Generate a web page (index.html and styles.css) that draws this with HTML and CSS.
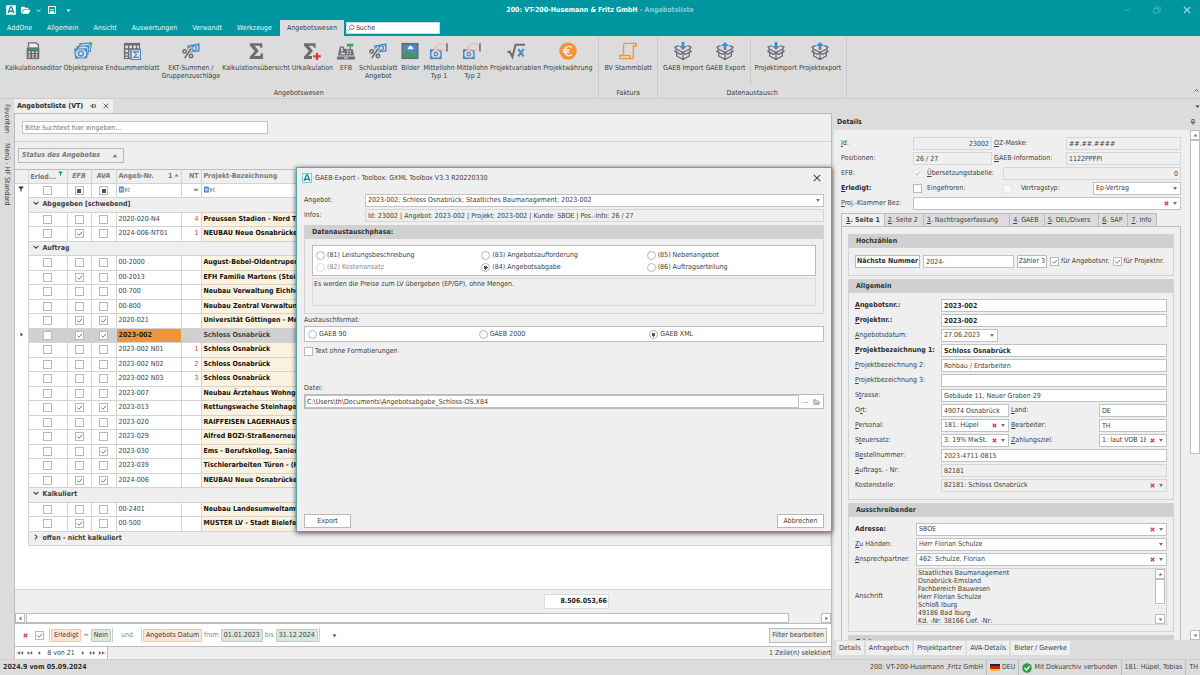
FILE: index.html
```html
<!DOCTYPE html>
<html lang="de">
<head>
<meta charset="utf-8">
<title>200: VT-200-Husemann &amp; Fritz GmbH - Angebotsliste</title>
<link rel="stylesheet" href="styles.css">
</head>
<body>
<svg class="defs" aria-hidden="true">
  <symbol id="i-calc" viewBox="0 0 20 20"><path d="M5 6V1h8l3 2v3" fill="#eee" stroke="#6b6c72" stroke-width="1.400"/><path d="M3 6h14v13H3z" fill="#6b6c72"/><path d="M4.500 7h11v2h-11z" fill="#3f9a55"/><path d="M5 10.500h2v1.800H5zm4 0h2v1.800H9zm4 0h2v1.800h-2zm-8 3h2v1.500H5zm4 0h2v1.500H9zm4 0h2v1.500h-2zm-8 2.600h2v1.500H5zm4 0h2v1.500H9zm4 0h2v1.500h-2z" fill="#e8e8e8"/></symbol>
  <symbol id="i-money" viewBox="0 0 20 20"><g fill="#dcdcdc" stroke="#4a8acb" stroke-width="1.300"><path d="M6.500 2l13-1-1.500 9.500-13 1z"/><path d="M3.500 5l13-1-1.200 10-12.300 1z"/><path d="M.8 8l13.200-.5.300 10L2 18z"/></g><path d="M6.500 2l4-.3-4.300 2.500zM15.500 1.300l4-.3-.6 3zM3.500 5l4-.3L3.200 8zM12.500 4.300l4-.3-.4 3z" fill="#4a8acb"/><circle cx="7.700" cy="12.800" r="2.700" fill="none" stroke="#4a8acb" stroke-width="1.500"/><path d="M.8 8l4-.2L1.400 12zM14 7.500l-4 .2 4.200 3.800zM2 18l3.500-.2-3.900-3.600zM14.300 17.500l-4 .2 3.900-3.700z" fill="#4a8acb"/></symbol>
  <symbol id="i-sheet" viewBox="0 0 20 20"><path d="M1 1h18v18H1z" fill="#6b6c72"/><path d="M2.500 4h3v3h-3zm4.500 0h3v3H7zm4.500 0h3v3h-3zm4.300 0h2v3h-2zM2.500 8.500h3v3h-3zm0 4.500h3v2h-3zm0 3.300h3v1.500h-3zM7 8.500h1v9H7z" fill="#dcdcdc"/><path d="M9 8.500h10.500V19.500H9z" fill="#e4e4e4" stroke="#4a8acb" stroke-width="1.300"/><path d="M17 12v-1h-5l3 3-3 3h5v-1" fill="none" stroke="#4a8acb" stroke-width="1.300"/></symbol>
  <symbol id="i-percent" viewBox="0 0 20 20"><path d="M6 4l13.500-2.500v9L6 12z" fill="#4a8acb"/><path d="M9 5L16.500 3.600 18 4.800v3.500L16.500 9.700 9 10.500z" fill="#dcdcdc"/><circle cx="13.500" cy="6.800" r="2.500" fill="none" stroke="#4a8acb" stroke-width="1.400"/><path d="M9.500 7L2.500 19" stroke="#dcdcdc" stroke-width="4"/><g fill="none" stroke="#6b6c72" stroke-width="1.700"><path d="M10 7.500L3 18"/><circle cx="2.900" cy="10.500" r="1.900"/><circle cx="10" cy="15.600" r="1.900"/></g></symbol>
  <symbol id="i-sigma" viewBox="0 0 20 20"><path d="M3 1.500h14v5h-2.200L14 4.300H8.500L13 10l-5 5.500h6.500l1-2.700h2.200V19H3v-2.300L8.600 10 3 3.800z" fill="#6b6c72"/></symbol>
  <symbol id="i-sigmaplus" viewBox="0 0 20 20"><path d="M1 1.500h13v5h-2L11.200 4.300H6.500L11 10l-5 5.500h4V19H1v-2.300L6.600 10 1 3.800z" fill="#6b6c72"/><path d="M14.300 12h2.500v2.700h2.900v2.500h-2.900V20h-2.500v-2.800h-2.900v-2.500h2.900z" fill="#e0353f"/></symbol>
  <symbol id="i-cash" viewBox="0 0 20 20"><path d="M11 2h7v3h-7z" fill="#3f9a55"/><path d="M14 5h1.500v3H14zM3 5h5v2.500h2V8h7.500l1.500 7h-18L2.500 8H3zM0 16h20v3.500H0z" fill="#6b6c72"/><path d="M4.500 6.500h2v4h-2zm6.500 3h1.500V11H11zm3 0h1.500V11H14zm-3 2.500h1.500v1.500H11zm3 0h1.500v1.500H14zM4 12h5v1.500H4zM8 17h4v1.200H8z" fill="#dcdcdc"/></symbol>
  <symbol id="i-image" viewBox="0 0 20 20"><path d="M.5 1h19v18H.5z" fill="#6b6c72"/><path d="M2.500 3h15v14h-15z" fill="#4a8acb"/><path d="M2.500 12.500L7 9.500l4 3.500 3-2 3.500 2v4h-15z" fill="#3f9a55"/><path d="M8.500 8c-1.500 0-1.500-2.200.3-2.200.5-2 3.200-2 3.500 0 1.700 0 1.700 2.200.2 2.200z" fill="#fff"/></symbol>
  <symbol id="i-hand" viewBox="0 0 20 20"><path d="M0 8h13v11H0z" fill="#4a8acb"/><path d="M3.300 9.700h6.400L11.400 11.500v4l-1.700 1.800H3.300l-1.700-1.800v-4z" fill="#dcdcdc"/><circle cx="6.500" cy="13.500" r="1.900" fill="none" stroke="#4a8acb" stroke-width="1.300"/><path d="M16.500 2.500l-5.500-.5-5 2.600c-1.200.8 0 2 1.200 1.600L4.500 8.500c-.7 1.400.5 2.200 1.800 1.500l2.700-1.800 3 .9 4.500-1.100" fill="#dcdcdc" stroke="#efb5a4" stroke-width="1.200"/><path d="M18 1.500h1.700v9H18z" fill="#6b6c72"/></symbol>
  <symbol id="i-root" viewBox="0 0 20 20"><path d="M.5 11.500l2.500-1 3 6L9.500 3H20" fill="none" stroke="#6b6c72" stroke-width="2.200"/><path d="M12.500 8l6 8m0-8l-6 8" stroke="#4a8acb" stroke-width="2.300"/></symbol>
  <symbol id="i-euro" viewBox="0 0 20 20"><circle cx="10" cy="10" r="9.700" fill="#f0953c"/><path d="M14.500 6.300A5 5 0 1 0 14.500 13.700M4.300 8.700h7.500M4.300 11.300h7" fill="none" stroke="#f5e9dc" stroke-width="1.800"/></symbol>
  <symbol id="i-scroll" viewBox="0 0 20 20"><path d="M5 15V3.500C5 2 6 1.500 7 1.500h12v3.300h-3V16c0 1.700-1 2.500-2 2.500H1V15h11v2c0 1 1.500 1.500 2 1.500M16 5V3" fill="none" stroke="#f0953c" stroke-width="1.500"/></symbol>
  <symbol id="i-box" viewBox="0 0 20 20"><path d="M3 10v5.500l7 4 7-4V10M10 12v7M3 8l7 3.500L17 8M3 8L.9 10.500l6.300 3.300L10 11.500l2.800 2.300 6.300-3.300L17 8l2-2.300L14.800 4M3 8L1 5.700 5.200 4" fill="none" stroke="#6b6c72" stroke-width="1.400" stroke-linejoin="round"/></symbol>
  <symbol id="i-down" viewBox="0 0 20 20"><use href="#i-box"/><path d="M8.500 0h3v4.500h3L10 9 5.500 4.500h3z" fill="#4a8acb"/></symbol>
  <symbol id="i-up" viewBox="0 0 20 20"><use href="#i-box"/><path d="M8.500 9V4.500h-3L10 0l4.500 4.500h-3V9z" fill="#4a8acb"/></symbol>
  <symbol id="i-x" viewBox="0 0 10 10"><path d="M1 1l8 8m0-8l-8 8" fill="none" stroke="currentColor" stroke-width="1.300"/></symbol>
  <symbol id="i-xb" viewBox="0 0 10 10"><path d="M1.500 1.500l7 7m0-7l-7 7" fill="none" stroke="currentColor" stroke-width="2.400"/></symbol>
  <symbol id="i-pin" viewBox="0 0 10 10"><path d="M0 5h4M4 1.500v7M4 3h5v4H4" fill="none" stroke="currentColor" stroke-width="1.300"/></symbol>
  <symbol id="i-caret" viewBox="0 0 10 10"><path d="M1 3h8L5 8z" fill="currentColor"/></symbol>
  <symbol id="i-chev" viewBox="0 0 10 10"><path d="M1 3l4 4 4-4" fill="none" stroke="currentColor" stroke-width="1.700"/></symbol>
  <symbol id="i-logo" viewBox="0 0 10 10"><path d="M.5.500h9v9h-9z" fill="#fff" stroke="currentColor" stroke-width=".5"/><path d="M2.200 8L4.400 2h1.200L7.800 8M3 6.200h4" fill="none" stroke="#07949d" stroke-width="1.400"/></symbol>
  <symbol id="i-funnel" viewBox="0 0 10 10"><path d="M1 1h8v1.500L6 5v4H4V5L1 2.500z" fill="currentColor"/></symbol>
  <symbol id="i-abc" viewBox="0 0 20 10"><path d="M0 0h8v10H0z" fill="#4a8acb"/><path d="M2.500 8V3.500h3V8M2.500 6h3" fill="none" stroke="#fff"/><path d="M10 3v5h3V3zM10 5.500h3M18.500 3H15.500v5h3" fill="none" stroke="#888" stroke-width="1.200"/></symbol>
  <symbol id="i-folder" viewBox="0 0 12 10"><path d="M0 9.500V1h4l1 1.200h4V4H3z" fill="currentColor"/><path d="M3.500 4.600h8L9.300 9.500H1z" fill="currentColor"/></symbol>
</svg>

<header class="titlebar">
  <div class="quick">
    <svg class="ic10"><use href="#i-logo"/></svg>
    <button class="bare" aria-label="Öffnen"><svg class="ic10"><use href="#i-folder"/></svg></button>
    <svg class="ic5"><use href="#i-chev"/></svg>
    <button class="bare" aria-label="Speichern"><svg class="ic8" viewBox="0 0 10 10"><path d="M.7.700h8.600v8.600H.7z" fill="none" stroke="#fff" stroke-width="1.400"/><path d="M2.500 4.500h5M3 7h4v2.500H3z" fill="#fff" stroke="#fff"/></svg></button>
    <svg class="ic5"><use href="#i-caret"/></svg>
  </div>
  <h1 class="app-title">200: VT-200-Husemann &amp; Fritz GmbH <span>- Angebotsliste</span></h1>
  <div class="winbtns">
    <button class="bare" aria-label="Minimieren"><svg class="ic8" viewBox="0 0 10 10"><path d="M1 5h8" stroke="currentColor"/></svg></button>
    <button class="bare" aria-label="Wiederherstellen"><svg class="ic8" viewBox="0 0 10 10"><path d="M1 3h6v6H1zM3 3V1h6v6H7" fill="none" stroke="currentColor"/></svg></button>
    <button class="bare bright" aria-label="Schließen"><svg class="ic8"><use href="#i-x"/></svg></button>
  </div>
</header>
<nav class="ribbontabs">
  <button>AddOne</button><button>Allgemein</button><button>Ansicht</button><button>Auswertungen</button><button>Verwandt</button><button>Werkzeuge</button><button class="on">Angebotswesen</button>
  <label class="search"><svg class="ic8" viewBox="0 0 10 10"><circle cx="6" cy="4" r="2.800" fill="none" stroke="#666"/><path d="M4 6L1 9" stroke="#666"/></svg><input type="text" value="Suche" aria-label="Suche"></label>
</nav>
<section class="ribbon">
  <div class="rgroup">
    <div class="ritems">
      <button class="rbtn"><svg><use href="#i-calc"/></svg>Kalkulationseditor</button>
      <button class="rbtn"><svg><use href="#i-money"/></svg>Objektpreise</button>
      <button class="rbtn"><svg><use href="#i-sheet"/></svg>Endsummenblatt</button>
      <button class="rbtn"><svg><use href="#i-percent"/></svg>EKT-Summen /<br>Gruppenzuschläge</button>
      <button class="rbtn"><svg><use href="#i-sigma"/></svg>Kalkulationsübersicht</button>
      <button class="rbtn"><svg><use href="#i-sigmaplus"/></svg>Urkalkulation</button>
      <button class="rbtn"><svg><use href="#i-cash"/></svg>EFB</button>
      <button class="rbtn"><svg><use href="#i-percent"/></svg>Schlussblatt<br>Angebot</button>
      <button class="rbtn"><svg><use href="#i-image"/></svg>Bilder</button>
      <button class="rbtn"><svg><use href="#i-hand"/></svg>Mittellohn<br>Typ 1</button>
      <button class="rbtn"><svg><use href="#i-hand"/></svg>Mittellohn<br>Typ 2</button>
      <button class="rbtn"><svg><use href="#i-root"/></svg>Projektvariablen</button>
      <button class="rbtn"><svg><use href="#i-euro"/></svg>Projektwährung</button>
    </div>
    <div class="rcap">Angebotswesen</div>
  </div>
  <div class="rgroup">
    <div class="ritems"><button class="rbtn"><svg><use href="#i-scroll"/></svg>BV Stammblatt</button></div>
    <div class="rcap">Faktura</div>
  </div>
  <div class="rgroup">
    <div class="ritems">
      <button class="rbtn"><svg><use href="#i-down"/></svg>GAEB Import</button>
      <button class="rbtn"><svg><use href="#i-up"/></svg>GAEB Export</button>
      <span class="rsep"></span>
      <button class="rbtn"><svg><use href="#i-down"/></svg>Projektimport</button>
      <button class="rbtn"><svg><use href="#i-up"/></svg>Projektexport</button>
    </div>
    <div class="rcap">Datenaustausch</div>
  </div>
  <button class="bare fold" aria-label="Menüband einklappen"><svg class="ic5 flip"><use href="#i-chev"/></svg></button>
</section>

<main class="work">
  <aside class="side"><span>Favoriten</span><span>Menü - HF Standard</span></aside>
  <div class="panes">
    <div class="doctabs"><div class="doctab"><b>Angebotsliste (VT)</b><svg class="ic6"><use href="#i-pin"/></svg><svg class="ic6"><use href="#i-x"/></svg></div><svg class="ic5"><use href="#i-caret"/></svg></div>
    <div class="split">
    <section class="list">
      <div class="listsearch"><input type="text" placeholder="Bitte Suchtext hier eingeben..." aria-label="Suchtext"></div>
      <div class="grouppanel"><button>Status des Angebotes <svg class="ic6 flip"><use href="#i-caret"/></svg></button></div>
      <div class="gridwrap">
      <table class="grid">
        <colgroup><col class="c0"><col class="c1"><col class="c2"><col class="c3"><col class="c4"><col class="c5"><col></colgroup>
        <thead>
          <tr><th></th><th class="l">Erled... <svg class="ic5 teal"><use href="#i-funnel"/></svg></th><th><i>EFB</i></th><th><i>AVA</i></th><th class="l">Angeb-Nr. <span class="sort">1<svg class="ic5 flip"><use href="#i-caret"/></svg></span></th><th class="r">NT</th><th class="l">Projekt-Bezeichnung</th></tr>
          <tr class="filter"><td><svg class="ic6"><use href="#i-funnel"/></svg></td><td><input type="checkbox" aria-label="Erledigt"></td><td><input type="checkbox" class="mixed" aria-label="EFB"></td><td><input type="checkbox" class="mixed" aria-label="AVA"></td><td class="l"><svg class="abc"><use href="#i-abc"/></svg></td><td class="r">=</td><td class="l"><svg class="abc"><use href="#i-abc"/></svg></td></tr>
        </thead>
        <tbody>
          <tr class="grp"><td></td><td colspan="6"><svg class="ic6"><use href="#i-chev"/></svg>Abgegeben [schwebend]</td></tr>
          <tr><td></td><td><input type="checkbox"></td><td><input type="checkbox"></td><td><input type="checkbox"></td><td>2020-020-N4</td><td>4</td><td>Preussen Stadion - Nord Tribüne</td></tr>
          <tr><td></td><td><input type="checkbox"></td><td><input type="checkbox" checked></td><td><input type="checkbox"></td><td>2024-006-NT01</td><td>1</td><td>NEUBAU Neue Osnabrücker</td></tr>
          <tr class="grp"><td></td><td colspan="6"><svg class="ic6"><use href="#i-chev"/></svg>Auftrag</td></tr>
          <tr><td></td><td><input type="checkbox"></td><td><input type="checkbox"></td><td><input type="checkbox"></td><td>00-2000</td><td></td><td>August-Bebel-Oldentruper</td></tr>
          <tr><td></td><td><input type="checkbox"></td><td><input type="checkbox" checked></td><td><input type="checkbox"></td><td>00-2013</td><td></td><td>EFH Familie Martens (Stein)</td></tr>
          <tr><td></td><td><input type="checkbox"></td><td><input type="checkbox"></td><td><input type="checkbox"></td><td>00-700</td><td></td><td>Neubau Verwaltung Eichhof</td></tr>
          <tr><td></td><td><input type="checkbox"></td><td><input type="checkbox"></td><td><input type="checkbox"></td><td>00-800</td><td></td><td>Neubau Zentral Verwaltung</td></tr>
          <tr><td></td><td><input type="checkbox"></td><td><input type="checkbox" checked></td><td><input type="checkbox" checked></td><td>2020-021</td><td></td><td>Universität Göttingen - Mensa</td></tr>
          <tr class="sel"><td><svg class="ic5 right"><use href="#i-caret"/></svg></td><td><input type="checkbox"></td><td><input type="checkbox" checked></td><td><input type="checkbox" checked></td><td>2023-002</td><td></td><td>Schloss Osnabrück</td></tr>
          <tr><td></td><td><input type="checkbox"></td><td><input type="checkbox"></td><td><input type="checkbox"></td><td>2023-002 N01</td><td>1</td><td>Schloss Osnabrück</td></tr>
          <tr><td></td><td><input type="checkbox"></td><td><input type="checkbox"></td><td><input type="checkbox"></td><td>2023-002 N02</td><td>2</td><td>Schloss Osnabrück</td></tr>
          <tr><td></td><td><input type="checkbox"></td><td><input type="checkbox"></td><td><input type="checkbox"></td><td>2023-002 N03</td><td>3</td><td>Schloss Osnabrück</td></tr>
          <tr><td></td><td><input type="checkbox"></td><td><input type="checkbox"></td><td><input type="checkbox"></td><td>2023-007</td><td></td><td>Neubau Ärztehaus Wohngebiet</td></tr>
          <tr><td></td><td><input type="checkbox"></td><td><input type="checkbox" checked></td><td><input type="checkbox" checked></td><td>2023-013</td><td></td><td>Rettungswache Steinhagen</td></tr>
          <tr><td></td><td><input type="checkbox"></td><td><input type="checkbox"></td><td><input type="checkbox"></td><td>2023-020</td><td></td><td>RAIFFEISEN LAGERHAUS EDER</td></tr>
          <tr><td></td><td><input type="checkbox"></td><td><input type="checkbox" checked></td><td><input type="checkbox"></td><td>2023-029</td><td></td><td>Alfred BOZI-Straßenerneuerung</td></tr>
          <tr><td></td><td><input type="checkbox"></td><td><input type="checkbox"></td><td><input type="checkbox" checked></td><td>2023-030</td><td></td><td>Ems - Berufskolleg, Sanierung</td></tr>
          <tr><td></td><td><input type="checkbox"></td><td><input type="checkbox"></td><td><input type="checkbox"></td><td>2023-039</td><td></td><td>Tischlerarbeiten Türen - (H)</td></tr>
          <tr><td></td><td><input type="checkbox"></td><td><input type="checkbox" checked></td><td><input type="checkbox" checked></td><td>2024-006</td><td></td><td>NEUBAU Neue Osnabrücker</td></tr>
          <tr class="grp"><td></td><td colspan="6"><svg class="ic6"><use href="#i-chev"/></svg>Kalkuliert</td></tr>
          <tr><td></td><td><input type="checkbox"></td><td><input type="checkbox"></td><td><input type="checkbox"></td><td>00-2401</td><td></td><td>Neubau Landesumweltamt</td></tr>
          <tr><td></td><td><input type="checkbox"></td><td><input type="checkbox" checked></td><td><input type="checkbox"></td><td>00-500</td><td></td><td>MUSTER LV - Stadt Bielefeld</td></tr>
          <tr class="grp"><td></td><td colspan="6"><svg class="ic6 right"><use href="#i-chev"/></svg>offen - nicht kalkuliert</td></tr>
        </tbody>
      </table>
      </div>
      <div class="summary"><output>8.506.053,66</output></div>
      <div class="hscroll"><button aria-label="Links"><svg class="ic5 left"><use href="#i-caret"/></svg></button><span class="hthumb"></span><button aria-label="Rechts"><svg class="ic5 right"><use href="#i-caret"/></svg></button></div>
      <div class="filterbar">
        <button class="bare red" aria-label="Filter löschen"><svg class="ic5"><use href="#i-xb"/></svg></button>
        <input type="checkbox" checked aria-label="Filter aktiv">
        <span class="cond"><em class="fld">Erledigt</em> = <em class="val">Nein</em></span>
        <span class="and">und</span>
        <span class="cond"><em class="fld">Angebots Datum</em> from <em class="val">01.01.2023</em> bis <em class="val">31.12.2024</em></span>
        <svg class="ic5 more"><use href="#i-caret"/></svg>
        <button class="btn editf">Filter bearbeiten</button>
      </div>
      <div class="navbar">
        <div class="pager"><svg viewBox="0 0 28 6"><path d="M1 1.500v3M3.700 3L2 3M2 3l2-1.500v3zM5 3l2-1.500v3zM11 3l2-1.500v3zM14 3l2-1.500v3zM22 3l2-1.500v3z" fill="#666" stroke="#666" stroke-width=".4"/></svg><span>8 von 21</span><svg viewBox="0 0 28 6"><path d="M27 1.500v3M26 3l-2-1.500v3zM23 3l-2-1.500v3zM17 3l-2-1.500v3zM14 3l-2-1.500v3zM6 3L4 1.500v3z" fill="#666" stroke="#666" stroke-width=".4"/></svg></div>
        <span>1 Zeile(n) selektiert</span>
      </div>
    </section>

    <section class="details">
      <div class="dhead"><b>Details</b><svg class="ic6 down"><use href="#i-pin"/></svg></div>
      <div class="dbody">
        <div class="dscroll">
          <div class="dform">
            <label for="f1"><u>I</u>d:</label><input id="f1" class="ro r" readonly value="23002"><label for="f2" class="pl"><u>O</u>Z-Maske:</label><input id="f2" class="ro" readonly value="##.##.####">
            <label for="f3">Positionen:</label><input id="f3" class="ro" readonly value="26 / 27"><label for="f4" class="pl"><u>G</u>AEB-Information:</label><input id="f4" class="ro" readonly value="1122PPPPI">
            <label for="f5">EFB:</label><div class="mix"><input id="f5" type="checkbox" checked disabled><label for="f6" class="w72"><u>Ü</u>bersetzungstabelle:</label><input id="f6" class="ro r grow" readonly value="0"></div>
            <label for="f7"><b><u>E</u>rledigt:</b></label><div class="mix"><input id="f7" type="checkbox"><label for="f8" class="w72">Eingefroren:</label><input id="f8" type="checkbox" disabled><label for="f9" class="w72">Vertragstyp:</label><select id="f9" class="grow"><option>Ep-Vertrag</option></select></div>
            <label for="f10"><u>P</u>roj.-Klammer Bez:</label><div class="combo wide"><select id="f10"><option></option></select><button class="clr" aria-label="Leeren"><svg><use href="#i-xb"/></svg></button></div>
          </div>
          <div class="ptabs"><button class="on"><u>1</u>. Seite 1</button><button><u>2</u>. Seite 2</button><button class="padr"><u>3</u>. Nachtragserfassung</button><button><u>4</u>. GAEB</button><button class="padm"><u>5</u>. DEL/Divers</button><button><u>6</u>. SAP</button><button><u>7</u>. Info</button></div>
          <div class="ppage">
            <fieldset class="box">
              <div class="boxhead">Hochzählen</div>
              <div class="count"><button class="btn"><b>Nächste Nummer</b></button><input type="text" class="grow" value="2024-" aria-label="Nummer"><button class="btn">Zähler 3</button><label><input type="checkbox" checked>für Angebotsnr.</label><label><input type="checkbox" checked>für Projektnr.</label></div>
            </fieldset>
            <fieldset class="box">
              <div class="boxhead">Allgemein</div>
              <div class="f4">
                <label for="g1"><b><u>A</u>ngebotsnr.:</b></label><input id="g1" class="wide bold" value="2023-002">
                <label for="g2"><b><u>P</u>rojektnr.:</b></label><input id="g2" class="wide bold" value="2023-002">
                <label for="g3"><u>A</u>ngebotsdatum:</label><select id="g3" class="wide date"><option>27.06.2023</option></select>
                <label for="g4"><b><u>P</u>rojektbezeichnung 1:</b></label><input id="g4" class="wide bold" value="Schloss Osnabrück">
                <label for="g5"><u>P</u>rojektbezeichnung 2:</label><input id="g5" class="wide" value="Rohbau / Erdarbeiten">
                <label for="g6"><u>P</u>rojektbezeichnung 3:</label><input id="g6" class="wide" value="">
                <label for="g7">S<u>t</u>rasse:</label><input id="g7" class="wide" value="Gebäude 11, Neuer Graben 29">
                <label for="g8">O<u>r</u>t:</label><input id="g8" value="49074 Osnabrück"><label for="g9" class="pl"><u>L</u>and:</label><input id="g9" value="DE">
                <label for="g10"><u>P</u>ersonal:</label><div class="combo"><select id="g10"><option>181: Hüpel</option></select><button class="clr" aria-label="Leeren"><svg><use href="#i-xb"/></svg></button></div><label for="g11" class="pl"><u>B</u>earbeiter:</label><input id="g11" value="TH">
                <label for="g12">S<u>t</u>euersatz:</label><div class="combo"><select id="g12"><option>3: 19% MwSt.</option></select><button class="clr" aria-label="Leeren"><svg><use href="#i-xb"/></svg></button></div><label for="g13" class="pl"><u>Z</u>ahlungsziel:</label><div class="combo"><select id="g13"><option>1: laut  VOB  18</option></select><button class="clr" aria-label="Leeren"><svg><use href="#i-xb"/></svg></button></div>
                <label for="g14">B<u>e</u>stellnummer:</label><input id="g14" class="wide" value="2023-4711-0815">
                <label for="g15"><u>A</u>uftrags. - Nr:</label><input id="g15" class="wide ro" readonly value="82181">
                <label for="g16">Kostenstelle:</label><div class="combo wide"><select id="g16" class="ro"><option>82181: Schloss Osnabrück</option></select><button class="clr" aria-label="Leeren"><svg><use href="#i-xb"/></svg></button></div>
              </div>
            </fieldset>
            <fieldset class="box">
              <div class="boxhead">Ausschreibender</div>
              <div class="f2">
                <label for="h1"><b>Adresse:</b></label><div class="combo"><select id="h1"><option>SBOE</option></select><button class="clr" aria-label="Leeren"><svg><use href="#i-xb"/></svg></button></div>
                <label for="h2"><u>Z</u>u Händen:</label><select id="h2"><option>Herr Florian Schulze</option></select>
                <label for="h3"><u>A</u>nsprechpartner:</label><div class="combo"><select id="h3"><option>462: Schulze, Florian</option></select><button class="clr" aria-label="Leeren"><svg><use href="#i-xb"/></svg></button></div>
                <label for="h4">Anschrift</label>
                <div class="addr"><textarea id="h4" readonly>Staatliches Baumanagement
Osnabrück-Emsland
Fachbereich Bauwesen
Herr Florian Schulze
Schloß Iburg
49186 Bad Iburg
Kd. -Nr: 38166 Lief. -Nr:</textarea><div class="vscroll"><button aria-label="Hoch"><svg class="ic5 flip"><use href="#i-caret"/></svg></button><span class="vthumb short"></span><button aria-label="Runter"><svg class="ic5"><use href="#i-caret"/></svg></button></div></div>
              </div>
            </fieldset>
            <fieldset class="box"><div class="boxhead">Fristen</div></fieldset>
          </div>
        </div>
        <div class="vscroll"><button aria-label="Hoch"><svg class="ic5 flip"><use href="#i-caret"/></svg></button><span class="vthumb"></span><button aria-label="Runter"><svg class="ic5"><use href="#i-caret"/></svg></button></div>
      </div>
      <div class="btabs"><button class="on">Details</button><button>Anfragebuch</button><button>Projektpartner</button><button>AVA-Details</button><button>Bieter / Gewerke</button></div>
    </section>
    </div>
  </div>
</main>

<footer class="status">
  <b>2024.9 vom 05.09.2024</b>
  <span class="cell first">200: VT-200-Husemann ,Fritz GmbH</span>
  <span class="cell"><i class="flag"></i>DEU</span>
  <span class="cell"><svg class="ic10" viewBox="0 0 10 10"><circle cx="5" cy="5" r="4.800" fill="#2f9a4f"/><path d="M2.500 5l2 2 3.200-3.700" fill="none" stroke="#fff" stroke-width="1.300"/></svg>Mit Dokuarchiv verbunden</span>
  <span class="cell">181: Hüpel, Tobias</span>
  <span class="cell">TH</span>
</footer>

<div class="dialog" role="dialog" aria-labelledby="dt">
  <div class="dlgtitle"><svg class="ic10 teal"><use href="#i-logo"/></svg><span id="dt">GAEB-Export - Toolbox: GXML Toolbox V3.3 R20220330</span><button class="bare" aria-label="Schließen"><svg class="ic8"><use href="#i-x"/></svg></button></div>
  <div class="dlgform">
    <label for="d1">Angebot:</label><select id="d1"><option>2023-002; Schloss Osnabrück; Staatliches Baumanagement; 2023-002</option></select>
    <label for="d2">Infos:</label><input id="d2" class="ro" readonly value="Id: 23002 | Angebot: 2023-002 | Projekt: 2023-002 | Kunde: SBOE | Pos.-Info: 26 / 27">
  </div>
  <fieldset class="box">
    <div class="boxhead">Datenaustauschphase:</div>
    <div class="phase">
      <div class="radios">
        <label><input type="radio" name="ph">(81) Leistungsbeschreibung</label><label><input type="radio" name="ph">(83) Angebotsaufforderung</label><label><input type="radio" name="ph">(85) Nebenangebot</label>
        <label class="dis"><input type="radio" name="ph" disabled>(82) Kostenansatz</label><label><input type="radio" name="ph" checked>(84) Angebotsabgabe</label><label><input type="radio" name="ph">(86) Auftragserteilung</label>
      </div>
      <p class="hint">Es werden die Preise zum LV übergeben (EP/GP), ohne Mengen.</p>
    </div>
  </fieldset>
  <div class="cap">Austauschformat:</div>
  <div class="radios fmt"><label><input type="radio" name="fm">GAEB 90</label><label><input type="radio" name="fm">GAEB 2000</label><label><input type="radio" name="fm" checked>GAEB XML</label></div>
  <label class="chk"><input type="checkbox">Text ohne Formatierungen</label>
  <label class="cap file" for="d3">Datei:</label>
  <div class="filebox"><input id="d3" value="C:\Users\th\Documents\Angebotsabgabe_Schloss-OS.X84"><button class="bare" aria-label="Durchsuchen">...</button><button class="bare grey" aria-label="Ordner öffnen"><svg class="ic8"><use href="#i-folder"/></svg></button></div>
  <div class="dlgbtns"><button class="btn">Export</button><button class="btn">Abbrechen</button></div>
</div>
</body>
</html>
```
FILE: styles.css
```css
* { box-sizing: border-box; }
body { margin: 0; height: 100vh; display: flex; flex-direction: column; overflow: hidden; background: #dcdcdc; color: #404040; font: 7px/9px "DejaVu Sans Condensed", "Noto Sans", sans-serif; }
button, input, select, textarea { font: inherit; color: inherit; margin: 0; border-radius: 0; }
button { padding: 0; white-space: nowrap; }
.defs { position: absolute; width: 0; height: 0; }
svg { flex: none; }
.ic5 { width: 5px; height: 5px; }
.ic6 { width: 6px; height: 6px; }
.ic8 { width: 8px; height: 8px; }
.ic10 { width: 10px; height: 10px; }
.flip { transform: rotate(180deg); }
.right { transform: rotate(-90deg); }
.left { transform: rotate(90deg); }
.down { transform: rotate(-90deg); }
.teal { color: #07949d; }
.grey { color: #b5b5b5; }
.red { color: #d8364a; }
.grow { flex: 1; min-width: 0; }
.bare { border: 0; background: none; display: flex; align-items: center; justify-content: center; }
.btn { background: #fff; border: 1px solid #b9b9b9; display: flex; align-items: center; justify-content: center; }

input:not([type]), input[type=text], select { width: 100%; height: 13px; min-width: 0; background-color: #fff; border: 1px solid #c2c2c2; padding: 0 2px; outline: 0; }
select { appearance: none; padding-right: 9px; background: #fff url("data:image/svg+xml,%3Csvg xmlns='http://www.w3.org/2000/svg' width='4' height='3'%3E%3Cpath d='M0 0h4L2 3z' fill='%23777'/%3E%3C/svg%3E") no-repeat right 3px center; }
input.ro:not([type]), select.ro { background-color: #efefef; border-color: #d6d6d6; }
input.r { text-align: right; }
input.bold, b { font-weight: bold; color: #2c2c2c; }
input[type=checkbox] { appearance: none; width: 9px; height: 9px; flex: none; background: #fff center/7px no-repeat; border: 1px solid #b9b9b9; }
input[type=checkbox]:checked { background-image: url("data:image/svg+xml,%3Csvg xmlns='http://www.w3.org/2000/svg' viewBox='0 0 8 8'%3E%3Cpath d='M1.500 4l2 2L7 2' fill='none' stroke='%23666'/%3E%3C/svg%3E"); }
input[type=checkbox]:disabled { border-color: #e2e2e2; opacity: .6; }
input.mixed { background-image: linear-gradient(#555, #555); background-size: 4px 4px; }
input[type=radio] { appearance: none; width: 9px; height: 9px; flex: none; border: 1px solid #b5b5b5; border-radius: 50%; background: #fff; }
input[type=radio]:checked { background: radial-gradient(circle, #555 2px, #fff 2px); }
.clr { border: 0; background: none; color: #d8364a; display: flex; position: absolute; right: 12px; top: 4px; }
.clr svg { width: 5px; height: 5px; }
.combo { position: relative; min-width: 0; }
.combo select { display: block; padding-right: 20px; white-space: pre; }

.titlebar { height: 20px; flex: none; background: #00969f; color: #fff; display: grid; grid-template-columns: 1fr auto 1fr; align-items: center; }
.quick { display: flex; align-items: center; gap: 5px; padding-left: 6px; }
.quick .ic10, .quick .ic8 { margin-left: 2px; display: block; }
.quick .ic10:first-child { margin-left: 0; }
.quick > .ic5:last-child { margin-left: 5px; }
.app-title { margin: 0; font-size: 7px; line-height: 10px; font-weight: bold; }
.app-title span { color: #8fd0d3; }
.winbtns { display: flex; justify-content: flex-end; gap: 22px; padding-right: 9px; color: #4db5bb; }
.bright { color: #b5dfe1; }
.ribbontabs { height: 16px; flex: none; background: #00969f; color: #e9f7f8; display: flex; align-items: stretch; }
.ribbontabs button { border: 0; background: none; padding: 1px 8px 0 7px; }
.ribbontabs .on { background: #dcdcdc; color: #404040; padding: 1px 7px 0; }
.search { display: flex; align-items: center; width: 94px; height: 12px; margin: 2px; background: #fff; border: 1px solid #c5dfe0; color: #404040; }
.search input[type=text] { border: 0; height: 10px; padding: 0 1px; }

.ribbon { height: 63px; flex: none; display: flex; position: relative; border-bottom: 1px solid #cacaca; }
.rgroup { display: flex; flex-direction: column; justify-content: space-between; border-right: 1px solid #cacaca; padding: 6px 4px 0; }
.rgroup:first-child { padding-right: 5px; }
.ritems { display: flex; }
.rbtn { border: 0; background: none; min-width: 24px; padding: 0 1px; display: flex; flex-direction: column; align-items: center; align-self: flex-start; text-align: center; line-height: 8px; white-space: nowrap; }
.rbtn svg { width: 18px; height: 18px; margin-bottom: 4px; }
.rcap { text-align: center; }
.rsep { width: 1px; height: 46px; background: #cacaca; margin: -3px 3px 0; }
.fold { margin: auto 1px 5px auto; }

.work { flex: 1; min-height: 0; display: flex; }
.side { width: 14px; flex: none; display: flex; flex-direction: column; align-items: center; gap: 10px; padding: 5px 2px 0 0; }
.side span { writing-mode: vertical-rl; }
.panes { flex: 1; min-width: 0; display: flex; flex-direction: column; }
.doctabs { height: 14px; flex: none; display: flex; justify-content: space-between; align-items: center; }
.doctab { height: 100%; background: #efefef; display: flex; align-items: center; gap: 7px; padding: 0 4px 0 3px; }
.split { flex: 1; min-height: 0; display: flex; gap: 2px; }
.list { flex: 1; min-width: 0; display: flex; flex-direction: column; background: #efefef; border: 1px solid #bcbcbc; border-width: 1px 1px 0; }
.listsearch { height: 28px; flex: none; padding: 7px; border-bottom: 1px solid #d0d0d0; }
.listsearch input { max-width: 246px; display: block; }
.grouppanel { height: 27px; flex: none; padding: 6px 3px; }
.grouppanel button { height: 15px; display: flex; align-items: center; gap: 12px; border: 1px solid #b9b9b9; background: #efefef; padding: 0 5px 0 3px; font-weight: bold; font-style: italic; color: #777; }
.gridwrap { flex: 1; min-height: 0; background: #fff; overflow: hidden; }
.grid { width: 100%; height: 377px; table-layout: fixed; border-collapse: collapse; }
.grid tr { height: 14px; }
.c0 { width: 13px; } .c1 { width: 39px; } .c2 { width: 24px; } .c3 { width: 25px; } .c4 { width: 65px; } .c5 { width: 20px; }
.grid th, .grid td { border: 1px solid #d3d3d3; padding: 0 2px; white-space: nowrap; overflow: hidden; text-align: center; vertical-align: middle; line-height: 9px; }
.grid th { background: #efefef; color: #777; border-top-color: #bcbcbc; }
.grid input { display: block; margin: auto; }
.grid .l { text-align: left; }
.grid .r { text-align: right; }
.grid td:first-child { border-left: 0; border-bottom: 0; border-top: 0; }
.grid th:first-child { border-left: 0; }
.grid th .teal { margin-bottom: 3px; }
.sort { float: right; color: #3f83bd; }
.sort svg { color: #777; margin-left: 1px; }
.abc { width: 12px; height: 7px; }
.grid tbody td:nth-child(5) { text-align: left; }
.grid tbody td:nth-child(6) { text-align: right; color: #d8364a; }
.grid tbody td:nth-child(7) { text-align: left; font-weight: bold; background: #fbf3df; color: #111; }
.grid tbody .grp td:nth-child(2) { text-align: left; font-weight: bold; background: #efefef; padding-left: 4px; }
.grp svg { margin-right: 4px; }
.grid tbody .sel td:nth-child(n+2) { background: #d0d0d0; }
.grid tbody .sel td:nth-child(5) { background: #f0953c; font-weight: bold; color: #222; }
.grid tbody .sel td:nth-child(7) { color: #444; }
.summary { height: 24px; flex: none; border-top: 1px solid #d8d8d8; padding: 4px 222px 0 0; display: flex; justify-content: flex-end; }
.summary output { width: 65px; height: 15px; background: #fff; border: 1px solid #dcdcdc; text-align: right; padding: 2px 1px; font-weight: bold; color: #222; }
.hscroll { height: 10px; flex: none; display: flex; justify-content: space-between; background: #efefef; }
.hscroll button, .vscroll button { width: 10px; height: 10px; flex: none; display: flex; align-items: center; justify-content: center; background: #fff; border: 1px solid #bcbcbc; color: #777; }
.hthumb { flex: 1; margin: 0 32px 0 1px; background: #fff; border: 1px solid #bcbcbc; }
.filterbar { height: 24px; flex: none; background: #fff; border: 1px solid #bcbcbc; border-width: 1px 0; display: flex; align-items: center; padding: 0 4px 0 8px; }
.filterbar > input { margin: 0 5px 0 7px; }
.cond { display: flex; align-items: center; gap: 2px; border: 1px solid #ccc; border-width: 0 1px; border-radius: 2px; height: 16px; padding: 0 1px; color: #888; }
.cond em { font-style: normal; border: 1px solid; border-radius: 1px; padding: 1px 2px; color: #404040; height: 13px; }
.cond .fld { background: #fbe4da; border-color: #f2c4b0; }
.cond .val { background: #dce8df; border-color: #b5d0bd; }
.and { margin: 0 8px; color: #888; }
.more { margin-left: 12px; }
.editf { margin-left: auto; height: 15px; background: #efefef; padding: 0 2px; }
.navbar { height: 12px; flex: none; display: flex; justify-content: space-between; align-items: center; }
.pager { background: #fff; border-right: 1px solid #bcbcbc; height: 100%; width: 93px; display: flex; align-items: center; justify-content: space-between; padding: 0 1px; }
.pager svg { width: 28px; height: 6px; }

.details { width: 366px; flex: none; display: flex; flex-direction: column; background: #dcdcdc; }
.dhead { height: 17px; flex: none; display: flex; align-items: center; justify-content: space-between; padding: 1px 4px 0 3px; }
.dbody { flex: 1; min-height: 0; background: #efefef; display: flex; }
.dscroll { flex: 1; min-width: 0; padding: 7px 9px 0 7px; overflow: hidden; }
.dbody > .vscroll { background: #efefef; }
.vscroll { width: 10px; flex: none; display: flex; flex-direction: column; justify-content: space-between; }
.vthumb { flex: 0 0 314px; margin-bottom: auto; background: #fff; border: 1px solid #bcbcbc; }
.vthumb.short { flex-basis: 25px; }
.dform { display: grid; grid-template-columns: 72px 79px 74px 1fr; grid-auto-rows: 13px; row-gap: 2px; align-items: center; white-space: nowrap; }
.pl { padding-left: 2px; }
.mix { grid-column: 2 / -1; display: flex; align-items: center; gap: 4px; }
.w72 { width: 73px; padding-left: 1px; flex: none; }
.mix > input:nth-of-type(2) + .w72 { padding-left: 5px; }
.wide { grid-column: 2 / -1; }
.ptabs { display: flex; margin-top: 3px; height: 13px; }
.ptabs button { border: 1px solid #bcbcbc; border-left: 0; border-bottom: 0; background: #dcdcdc; padding: 0 5px 0 3px; }
.ptabs .on { background: #efefef; font-weight: bold; border-left: 1px solid #bcbcbc; padding: 0 4px; }
.ptabs .padr { padding-right: 11px; }
.ptabs .padm { padding-right: 8px; }
.ppage { border: 1px solid #bcbcbc; border-width: 1px 1px 0; padding: 7px 6px; display: flex; flex-direction: column; gap: 3px; }
.box { border: 1px solid #d3d3d3; border-top: 0; margin: 0; padding: 0; min-width: 0; }
.boxhead { background: #d0d0d0; font-weight: bold; height: 14px; line-height: 14px; padding: 0 7px; color: #333; }
.count { display: flex; align-items: center; gap: 3px; padding: 7px 9px 7px 6px; white-space: nowrap; }
.count .btn { height: 13px; padding: 0 1px; }
.count label { display: flex; align-items: center; gap: 2px; }
.f4 { display: grid; grid-template-columns: 86px 68px 1fr 68px; grid-auto-rows: 13px; row-gap: 2px; align-items: center; padding: 6px 6px 7px; white-space: nowrap; }
.date { max-width: 57px; }
.f2 { display: grid; grid-template-columns: 61px 1fr; row-gap: 2px; align-items: center; padding: 6px; white-space: nowrap; }
.addr { display: flex; height: 57px; border: 1px solid #d2d2d2; overflow: hidden; }
textarea { flex: 1; border: 0; background: none; resize: none; padding: 0 1px; line-height: 8px; overflow: hidden; outline: 0; }
.addr .vscroll { margin: 0 1px; }
.btabs { height: 19px; flex: none; display: flex; gap: 2px; padding: 1px 0 4px 2px; }
.btabs button { border: 0; background: #efefef; padding: 0 3px; }

.status { height: 16px; flex: none; display: flex; align-items: center; border-top: 1px solid #cfcfcf; padding: 0 2px 0 3px; }
.cell { height: 100%; display: flex; align-items: center; gap: 2px; border-left: 1px solid #bcbcbc; padding: 0 3px; }
.cell:last-child { padding-right: 0; }
.first { margin-left: auto; border: 0; }
.flag { width: 10px; height: 7px; background: linear-gradient(#222 33%, #c8202f 33% 66%, #f4c430 66%); }

.dialog { position: absolute; left: 296px; top: 167px; width: 536px; height: 365px; background: #efefef; border: 1px solid #4fa9af; box-shadow: 0 1px 5px rgba(0, 0, 0, .7); display: flex; flex-direction: column; padding: 0 7px 3px; }
.dlgtitle { height: 26px; flex: none; display: flex; align-items: center; gap: 3px; padding: 0 3px 6px 0; margin-left: -2px; }
.dlgtitle button { margin-left: auto; }
.dlgform { display: grid; grid-template-columns: 61px 1fr; row-gap: 2px; align-items: center; margin-bottom: 3px; }
.phase { padding: 6px 7px 7px; }
.radios { display: grid; grid-template-columns: 1fr 1fr 1fr; background: #fff; border: 1px solid #bdbdbd; padding: 3px 3px 2px; }
.radios label, .chk { display: flex; align-items: center; gap: 2px; height: 12px; }
.dis { color: #888; }
.dis input { opacity: .5; }
.hint { margin: 2px 0 0; border: 1px solid #d9d9d9; height: 28px; padding: 1px; }
.cap { margin: 2px 0 1px; }
.radios.fmt { padding: 1px 3px; }
.chk { margin-top: 3px; }
.file { margin-top: 27px; }
.filebox { display: flex; align-items: center; background: #fff; border: 1px solid #b9b9b9; height: 15px; }
.filebox input { flex: 1; padding: 0 1px; }
.filebox button { width: 12px; }
.dlgbtns { margin-top: auto; display: flex; justify-content: space-between; }
.dlgbtns .btn { width: 47px; height: 14px; }
```
